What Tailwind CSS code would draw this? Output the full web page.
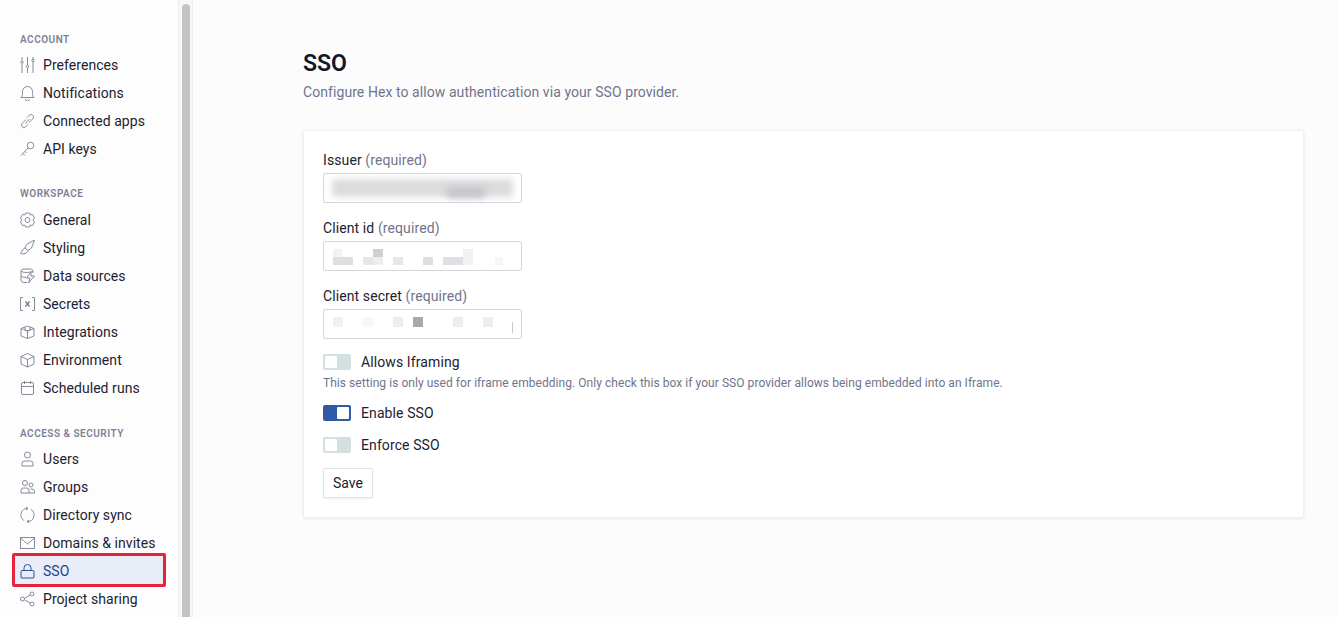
<!DOCTYPE html>
<html lang="en">
<head>
<meta charset="UTF-8" />
<title>SSO</title>
<script src="https://cdn.jsdelivr.net/npm/@tailwindcss/browser@4"></script>
</head>
<body class="h-[617px] overflow-hidden bg-[#fcfcfd] font-['Roboto',sans-serif] text-[#1c2230]">
<div class="flex h-[617px]">

  <aside class="w-[178px] shrink-0 overflow-hidden bg-[#fdfdfe] pt-[34px]">
    <h3 class="pl-5 text-[10px] leading-3 font-semibold tracking-[0.5px] text-[#7d8196]">ACCOUNT</h3>
    <ul class="mt-[5px] text-[14px] tracking-[0.05px]">
      <li class="flex h-7 items-center gap-[8px] pl-5">
        <svg class="h-4 w-[15px] text-[#7b7e90]" viewBox="0 0 15 16" fill="none" stroke="currentColor" stroke-width="0.9"><path d="M2 0v3.500M2 7v9M7.500 0v8M7.500 11v5M13 0v2M13 5v11"/><circle cx="2" cy="5.200" r="1.200"/><circle cx="7.500" cy="9.500" r="1.200"/><circle cx="13" cy="3.500" r="1.200"/></svg>
        Preferences
      </li>
      <li class="flex h-7 items-center gap-[8px] pl-5">
        <svg class="h-4 w-[15px] text-[#7b7e90]" viewBox="0 0 15 16" fill="none" stroke="currentColor" stroke-width="0.9"><path d="M1 12.500c1.500-1 1.500-3 1.500-6a5 5 0 0 1 10 0c0 3 0 5 1.500 6z"/><path d="M5.500 14a2 2 0 0 0 4 0"/></svg>
        Notifications
      </li>
      <li class="flex h-7 items-center gap-[8px] pl-5">
        <svg class="h-4 w-[15px] text-[#7b7e90]" viewBox="0 0 15 16" fill="none" stroke="currentColor" stroke-width="0.9"><path d="M6 6.500 2 10.500a2.500 2.500 0 0 0 3.500 3.500L8 11.500"/><path d="M7 4.500 9.500 2a2.500 2.500 0 0 1 3.500 3.500L9 9.500"/><path d="M5.500 10.500 9.500 6"/></svg>
        Connected apps
      </li>
      <li class="flex h-7 items-center gap-[8px] pl-5">
        <svg class="h-4 w-[15px] text-[#7b7e90]" viewBox="0 0 15 16" fill="none" stroke="currentColor" stroke-width="0.9"><circle cx="10.500" cy="4.500" r="3.300"/><path d="M8 7 1 14.500M3 12.500l2 2M5 10.500l1.500 1.500"/></svg>
        API keys
      </li>
    </ul>

    <h3 class="mt-[25px] pl-5 text-[10px] leading-3 font-semibold tracking-[0.5px] text-[#7d8196]">WORKSPACE</h3>
    <ul class="mt-[6px] text-[14px] tracking-[0.05px]">
      <li class="flex h-7 items-center gap-[8px] pl-5">
        <svg class="h-4 w-[15px] text-[#7b7e90]" viewBox="0 0 15 16" fill="none" stroke="currentColor" stroke-width="0.9"><path d="M5.500 1h4l.7 2 2.300-.5 2 3.500-1.500 2 1.500 2-2 3.500-2.300-.5-.7 2h-4l-.7-2-2.300.5-2-3.500 1.500-2-1.500-2 2-3.500 2.300.5z"/><circle cx="7.500" cy="8" r="2.500"/></svg>
        General
      </li>
      <li class="flex h-7 items-center gap-[8px] pl-5">
        <svg class="h-4 w-[15px] text-[#7b7e90]" viewBox="0 0 15 16" fill="none" stroke="currentColor" stroke-width="0.9"><path d="M14.500 0 6.500 4.500 5 8l3 2.500 3.500-2.500z"/><path d="M5 8C2.500 8.500 2.500 11 .5 13.500c3 .8 6.500.2 7.500-3"/></svg>
        Styling
      </li>
      <li class="flex h-7 items-center gap-[8px] pl-5">
        <svg class="h-4 w-[15px] text-[#7b7e90]" viewBox="0 0 15 16" fill="none" stroke="currentColor" stroke-width="0.9"><path d="M7 14.500H3L1 13V2.500L3 1h8l2 1.500V5"/><path d="M1 3c2 2 8 2 12 0M1 8c1.500 1 3 1.500 5 1.500"/><path d="M11 4 6.500 10H10l-1.500 5L14.500 8H11z"/></svg>
        Data sources
      </li>
      <li class="flex h-7 items-center gap-[8px] pl-5">
        <svg class="h-4 w-[15px] text-[#7b7e90]" viewBox="0 0 15 16" fill="none" stroke="currentColor" stroke-width="0.9"><path d="M3 1.500H.5v13H3M12 1.500h2.500v13H12"/><path d="M5.500 5.500l4 5M9.500 5.500l-4 5" stroke-width="1.400"/></svg>
        Secrets
      </li>
      <li class="flex h-7 items-center gap-[8px] pl-5">
        <svg class="h-4 w-[15px] text-[#7b7e90]" viewBox="0 0 15 16" fill="none" stroke="currentColor" stroke-width="0.9"><path d="M1 4.500 7.500 2 14 4.500v7.500L7.500 14.500 1 12z"/><path d="M1 4.500 7.500 7 14 4.500M7.500 7v7.500"/><path d="M5 3.200v2.800l2.500 1 2.500-1V3.200"/></svg>
        Integrations
      </li>
      <li class="flex h-7 items-center gap-[8px] pl-5">
        <svg class="h-4 w-[15px] text-[#7b7e90]" viewBox="0 0 15 16" fill="none" stroke="currentColor" stroke-width="0.9"><path d="M1 4.500 7.500 1.500 14 4.500v7.500L7.500 15 1 12z"/><path d="M1 4.500 7.500 7.500 14 4.500M7.500 7.500V15"/></svg>
        Environment
      </li>
      <li class="flex h-7 items-center gap-[8px] pl-5">
        <svg class="h-4 w-[15px] text-[#7b7e90]" viewBox="0 0 15 16" fill="none" stroke="currentColor" stroke-width="0.9"><rect x="1.500" y="2.500" width="12" height="12" rx="1.500"/><path d="M1.500 6.500h12M4.500 1v3M10.500 1v3"/></svg>
        Scheduled runs
      </li>
    </ul>

    <h3 class="mt-[26px] pl-5 text-[10px] leading-3 font-semibold tracking-[0.5px] text-[#7d8196]">ACCESS &amp; SECURITY</h3>
    <ul class="mt-[5px] text-[14px] tracking-[0.05px]">
      <li class="flex h-7 items-center gap-[8px] pl-5">
        <svg class="h-4 w-[15px] text-[#7b7e90]" viewBox="0 0 15 16" fill="none" stroke="currentColor" stroke-width="0.9"><circle cx="7.500" cy="4" r="3"/><path d="M2 15v-2.500A2.500 2.500 0 0 1 4.500 10h6a2.500 2.500 0 0 1 2.500 2.500V15z"/></svg>
        Users
      </li>
      <li class="flex h-7 items-center gap-[8px] pl-5">
        <svg class="h-4 w-[15px] text-[#7b7e90]" viewBox="0 0 15 16" fill="none" stroke="currentColor" stroke-width="0.9"><circle cx="5" cy="4" r="2.500"/><circle cx="11" cy="6" r="2"/><path d="M1 14v-2.500A2.500 2.500 0 0 1 3.500 9h3A2.500 2.500 0 0 1 9 11.500V14zM10.500 10H12a2.500 2.500 0 0 1 2.500 2.500V14H9"/></svg>
        Groups
      </li>
      <li class="flex h-7 items-center gap-[8px] pl-5">
        <svg class="h-4 w-[15px] text-[#7b7e90]" viewBox="0 0 15 16" fill="none" stroke="currentColor" stroke-width="0.9"><path d="M4.200 13.600A6.500 6.500 0 0 1 8 1.500L6 .2M8 1.500 6 3"/><path d="M10.800 2.400A6.500 6.500 0 0 1 7 14.500l2-1.300M7 14.500l2 1.300"/></svg>
        Directory sync
      </li>
      <li class="flex h-7 items-center gap-[8px] pl-5">
        <svg class="h-4 w-[15px] text-[#7b7e90]" viewBox="0 0 15 16" fill="none" stroke="currentColor" stroke-width="0.9"><rect x=".5" y="2.500" width="14" height="11"/><path d="m.5 3 7 6 7-6"/></svg>
        Domains &amp; invites
      </li>
      <li class="relative flex h-7 items-center gap-[8px] pl-5 text-[#22448f]">
        <div class="absolute top-[-4px] left-[12px] h-[34px] w-[154px] rounded-[2px] border-[3px] border-[#e5243b] bg-[#e8edf7]"></div>
        <svg class="relative h-4 w-[15px] text-[#2d4f9a]" viewBox="0 0 15 16" fill="none" stroke="currentColor" stroke-width="1"><rect x="1" y="7.500" width="13" height="7.500" rx="1"/><path d="M4 7.500V5a3.500 3.500 0 0 1 7 0v2.500"/></svg>
        <span class="relative">SSO</span>
      </li>
      <li class="flex h-7 items-center gap-[8px] pl-5">
        <svg class="h-4 w-[15px] text-[#7b7e90]" viewBox="0 0 15 16" fill="none" stroke="currentColor" stroke-width="0.9"><circle cx="2.500" cy="8" r="2"/><circle cx="12" cy="3" r="2"/><circle cx="12" cy="13" r="2"/><path d="M4.500 7.200 10.200 4M4.500 8.800l5.700 3.200"/></svg>
        Project sharing
      </li>
    </ul>
  </aside>

  <div class="flex w-[15px] shrink-0 justify-center border-x border-[#efeff2] bg-[#f8f8f9]">
    <div class="mt-[4px] h-full w-2 rounded-full bg-[#c4c4c6]"></div>
  </div>

  <main class="flex-1 pt-[51px] pr-[34px] pl-[110px]">
    <h1 class="text-[23px] leading-[26px] font-semibold text-[#101828]">SSO</h1>
    <p class="mt-[5px] text-[14px] leading-5 tracking-[0.07px] text-[#70748a]">Configure Hex to allow authentication via your SSO provider.</p>

    <section class="mt-[28px] h-[388px] rounded-[2px] border border-[#f0f0f2] bg-white px-[19px] pt-[18px] shadow-[0_1px_3px_rgba(30,35,60,0.10)]">
      <label class="block h-5 text-[14px] leading-[22px] tracking-[0.1px]">Issuer <span class="text-[#70748a]">(required)</span></label>
      <div class="relative mt-[4px] flex h-[30px] w-[199px] items-center rounded-[2px] border border-[#d3d6dc] bg-white px-2">
        <div class="h-[18px] w-[182px] rounded-[4px] bg-[#dcdcdf] blur-[3px]"></div>
        <div class="absolute top-[13px] left-[122px] h-[11px] w-[40px] rounded-full bg-[#c6c6ca] blur-[3px]"></div>
      </div>

      <label class="mt-[14px] block h-5 text-[14px] leading-[22px] tracking-[0.1px]">Client id <span class="text-[#70748a]">(required)</span></label>
      <div class="relative mt-[4px] h-[30px] w-[199px] rounded-[2px] border border-[#d3d6dc] bg-white">
        <div class="absolute top-[7px] left-[9px] h-[8px] w-[9px] bg-[#f3f3f4]"></div>
        <div class="absolute top-[15px] left-[9px] h-[8px] w-[20px] bg-[#dededf]"></div>
        <div class="absolute top-[15px] left-[39px] h-[8px] w-[10px] bg-[#e6e6e8]"></div>
        <div class="absolute top-[7px] left-[49px] h-[8px] w-[10px] bg-[#d0d0d3]"></div>
        <div class="absolute top-[15px] left-[49px] h-[8px] w-[10px] bg-[#eeeeef]"></div>
        <div class="absolute top-[15px] left-[69px] h-[8px] w-[10px] bg-[#e6e6e8]"></div>
        <div class="absolute top-[15px] left-[99px] h-[8px] w-[10px] bg-[#dededf]"></div>
        <div class="absolute top-[15px] left-[119px] h-[8px] w-[20px] bg-[#e0e0e2]"></div>
        <div class="absolute top-[7px] left-[139px] h-[16px] w-[10px] bg-[#f1f1f2]"></div>
        <div class="absolute top-[15px] left-[171px] h-[8px] w-[8px] bg-[#f6f6f7]"></div>
      </div>

      <label class="mt-[14px] block h-5 text-[14px] leading-[22px] tracking-[0.1px]">Client secret <span class="text-[#70748a]">(required)</span></label>
      <div class="relative mt-[4px] h-[30px] w-[199px] rounded-[2px] border border-[#d3d6dc] bg-white">
        <div class="absolute top-[7px] left-[9px] h-[10px] w-[10px] bg-[#f1f1f2]"></div>
        <div class="absolute top-[7px] left-[39px] h-[10px] w-[10px] bg-[#f7f7f8]"></div>
        <div class="absolute top-[7px] left-[69px] h-[10px] w-[10px] bg-[#eeeeef]"></div>
        <div class="absolute top-[7px] left-[89px] h-[10px] w-[10px] bg-[#a9a9ad]"></div>
        <div class="absolute top-[7px] left-[129px] h-[10px] w-[10px] bg-[#eeeeef]"></div>
        <div class="absolute top-[7px] left-[159px] h-[10px] w-[10px] bg-[#eeeeef]"></div>
        <div class="absolute top-[12px] left-[188px] h-[11px] w-px bg-[#c9c9cc]"></div>
      </div>

      <div class="mt-[15px] flex h-4 items-center gap-[10px] text-[14px] tracking-[0.1px]">
        <span class="flex h-4 w-7 items-center rounded-[2px] bg-[#d3e0e0] pl-[2px]"><span class="h-3 w-3 rounded-[1px] bg-white"></span></span>
        <span class="pt-px">Allows Iframing</span>
      </div>
      <p class="mt-[5px] text-[12px] leading-4 tracking-[0.05px] text-[#70748a]">This setting is only used for iframe embedding. Only check this box if your SSO provider allows being embedded into an Iframe.</p>
      <div class="mt-[14px] flex h-4 items-center gap-[10px] text-[14px] tracking-[0.1px]">
        <span class="flex h-4 w-7 items-center justify-end rounded-[2px] bg-[#2f5aa6] pr-[2px]"><span class="h-3 w-3 rounded-[1px] bg-white"></span></span>
        <span class="pt-px">Enable SSO</span>
      </div>
      <div class="mt-[16px] flex h-4 items-center gap-[10px] text-[14px] tracking-[0.1px]">
        <span class="flex h-4 w-7 items-center rounded-[2px] bg-[#d3e0e0] pl-[2px]"><span class="h-3 w-3 rounded-[1px] bg-white"></span></span>
        <span class="pt-px">Enforce SSO</span>
      </div>
      <button class="mt-[15px] h-[30px] w-[50px] rounded-[2px] border border-[#e3e4e8] bg-white text-[14px] shadow-[0_1px_2px_rgba(30,35,60,0.08)]">Save</button>
    </section>
  </main>
</div>
</body>
</html>
